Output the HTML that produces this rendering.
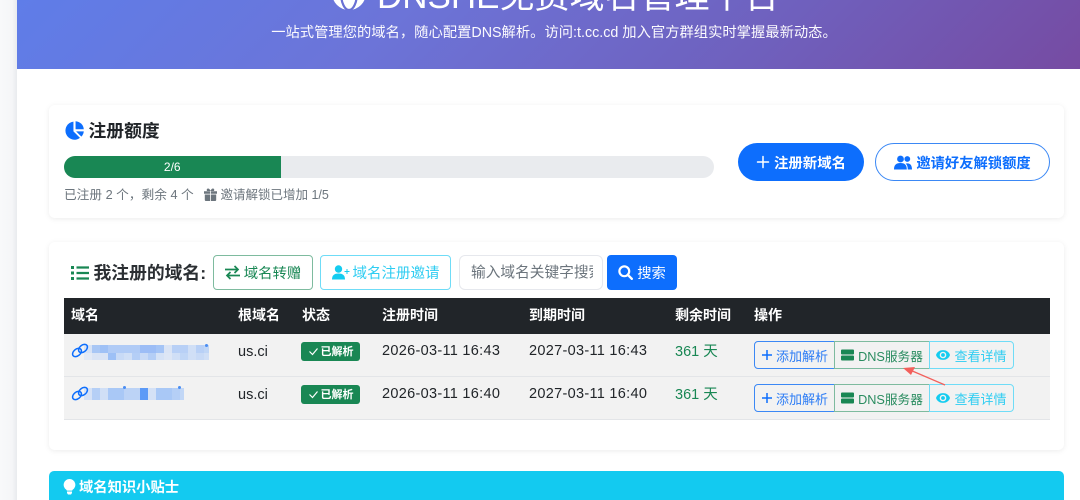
<!DOCTYPE html>
<html lang="zh-CN"><head><meta charset="utf-8"><title>DNSHE免费域名管理平台</title>
<style>
*{box-sizing:border-box;margin:0;padding:0}
html,body{width:1080px;height:500px;overflow:hidden;background:#fff}
body{font-family:"Liberation Sans","Noto Sans CJK SC",sans-serif;color:#212529;position:relative}
#w{position:absolute;inset:0;filter:blur(.3px)}
.a{position:absolute;white-space:nowrap}
.card{position:absolute;background:#fff;border-radius:6px;box-shadow:0 1px 6px rgba(0,0,0,.08)}
.btn{position:absolute;display:flex;align-items:center;justify-content:center;white-space:nowrap}
svg{display:block;flex:none}
.th{position:absolute;top:306px;color:#fff;font-size:14px;font-weight:700;line-height:18px;white-space:nowrap}
.td{position:absolute;font-size:14px;line-height:18px;white-space:nowrap;color:#212529}
.dt{font-size:14.5px;letter-spacing:.3px}
.g{display:flex;position:absolute;left:754px;width:260px;height:28px;font-size:13px}
.g div{display:flex;align-items:center;justify-content:center;gap:3px;height:28px;border:1px solid;background:transparent}
.badge{position:absolute;left:301px;width:59px;height:19px;background:#198754;color:#fff;font-size:11px;font-weight:700;border-radius:3px;display:flex;align-items:center;justify-content:center;gap:2px}
.row{position:absolute;display:flex}
.row i{display:block;width:8px;height:100%;flex:none}
.dot{position:absolute;width:3px;height:3px;background:#4a8df2;border-radius:50%}
</style></head><body><div id="w">
<div class="a" style="left:0;top:0;width:17px;height:500px;background:linear-gradient(90deg,#f8f9fa 0,#f5f6f8 70%,#e9ebee 100%)"></div>
<div class="a" style="left:17px;top:0;width:1063px;height:69px;background:linear-gradient(135deg,#5f7de8 0%,#6c74d8 35%,#6f60bd 70%,#764ba2 100%)"></div>

<svg class="a" style="left:332px;top:-24px" width="34" height="34" viewBox="0 0 34 34"><circle cx="17" cy="17" r="17" fill="#fff"/><ellipse cx="17" cy="17" rx="8" ry="17" fill="#fff" stroke="#6a70d4" stroke-width="2.200"/></svg>
<div class="a" style="left:377px;top:-23.500px;font-size:35px;line-height:40px;color:#fff;font-weight:400">DNSHE免费域名管理平台</div>
<div class="a" style="left:253px;top:23px;width:602px;text-align:center;font-size:14.300px;line-height:20px;color:#fbfafe">一站式管理您的域名，随心配置DNS解析。访问:t.cc.cd 加入官方群组实时掌握最新动态。</div>

<div class="card" style="left:49px;top:105px;width:1015px;height:113px"></div>
<svg class="a" style="left:65px;top:121px" width="19" height="19" viewBox="0 0 18 18"><path d="M8 .6v9.200l6.200 6.200A8.600 8.600 0 1 1 8 .6Z" fill="#0d6efd"/><path d="M10 .2A8.300 8.300 0 0 1 17.800 7.800H10Z" fill="#0d6efd"/><path d="M10.500 9.800h7.300a8.300 8.300 0 0 1-2.300 5Z" fill="#0d6efd"/></svg>
<div class="a" style="left:88.500px;top:120px;font-size:17.800px;line-height:22px;font-weight:700;color:#212529">注册额度</div>
<div class="a" style="left:64px;top:155.500px;width:650px;height:22.500px;background:#e9ebee;border-radius:11px;overflow:hidden"><div style="width:216.500px;height:100%;background:#198754;color:#fff;font-size:12px;line-height:22.500px;text-align:center">2/6</div></div>
<div class="a" style="left:64px;top:186px;font-size:12.700px;line-height:18px;color:#6c757d">已注册 2 个，剩余 4 个</div>
<svg class="a" style="left:204px;top:188px" width="13" height="13" viewBox="0 0 13 13"><path d="M0 3.200h6.100v2.500H0ZM6.900 3.200H13v2.500H6.900ZM.8 6.500h5.300V13H1.800a1 1 0 0 1-1-1ZM6.900 6.500h5.300V12a1 1 0 0 1-1 1H6.900ZM3 3C2 1 4 0 5 .8 5.800 1.400 6.300 2.300 6.500 3 6.700 2.300 7.200 1.400 8 .8 9 0 11 1 10 3Z" fill="#6c757d"/></svg>
<div class="a" style="left:220.500px;top:186px;font-size:12.500px;line-height:18px;color:#6c757d">邀请解锁已增加 1/5</div>

<div class="btn" style="left:738px;top:143px;width:126px;height:38px;background:#0d6efd;border-radius:19px;color:#fff;font-size:14.400px;font-weight:700;gap:4px"><svg width="14" height="14" viewBox="0 0 14 14"><path d="M7 1.500v11M1.500 7h11" stroke="#fff" stroke-width="1.500" stroke-linecap="round"/></svg>注册新域名</div>
<div class="btn" style="left:875px;top:143px;width:175px;height:38px;background:#fff;border:1px solid #3b88f5;border-radius:19px;color:#0d6efd;font-size:14.300px;font-weight:700;gap:4px"><svg width="18" height="15" viewBox="0 0 18 15"><circle cx="6.500" cy="4" r="3.400" fill="#0d6efd"/><circle cx="13.300" cy="4" r="2.900" fill="#0d6efd"/><path d="M0 14.500c0-4.500 2-6.500 6.500-6.500s6.300 2 6.300 6.500ZM13.800 14.500c0-2.700-.7-4.600-2-5.900 4.200-1.100 6.200 1.500 6.200 5.900Z" fill="#0d6efd"/></svg>邀请好友解锁额度</div>

<div class="card" style="left:49px;top:242px;width:1015px;height:208px"></div>
<svg class="a" style="left:71px;top:265px" width="18" height="16" viewBox="0 0 18 16"><path d="M5.500 2.500H18M5.500 8H18M5.500 13.500H18" stroke="#198754" stroke-width="2.200"/><path d="M0 1h3v3H0ZM0 6.500h3v3H0ZM0 12h3v3H0Z" fill="#198754"/></svg>
<div class="a" style="left:93.500px;top:262px;font-size:17.800px;line-height:22px;font-weight:700;color:#2b2f33">我注册的域名:</div>
<div class="btn" style="left:213px;top:255px;width:100px;height:35px;border:1px solid #7ebb9f;border-radius:4px;color:#198754;font-size:14.400px;gap:4px"><svg width="15" height="15" viewBox="0 0 15 15"><path d="M0 4.500h12.500M9.500 1l3.500 3.500L9.500 8M15 10.500H2.500M5.500 7L2 10.500 5.500 14" fill="none" stroke="#198754" stroke-width="1.700"/></svg>域名转赠</div>
<div class="btn" style="left:320px;top:255px;width:131px;height:35px;border:1px solid #6fdcf7;border-radius:4px;color:#2fcdf2;font-size:14.500px;gap:3px"><svg width="18" height="15" viewBox="0 0 18 15"><circle cx="6.500" cy="4" r="3.700" fill="#14ccf0"/><path d="M0 14.500c0-4.500 2.500-6 6.500-6s6.500 1.500 6.500 6Z" fill="#14ccf0"/><path d="M15 4v5M12.500 6.500h5" stroke="#14ccf0" stroke-width="1"/></svg>域名注册邀请</div>
<div class="a" style="left:459px;top:255px;width:144px;height:35px;border:1px solid #e6e8ed;border-radius:6px;background:#fff"><div style="position:absolute;left:11px;top:1px;width:122px;overflow:hidden;font-size:14.700px;line-height:33px;color:#6c757d">输入域名关键字搜索</div></div>
<div class="btn" style="left:607px;top:255px;width:70px;height:35px;background:#0d6efd;border-radius:4px;color:#fff;font-size:14.300px;font-weight:400;gap:4px"><svg width="15" height="15" viewBox="0 0 15 15"><circle cx="6.300" cy="6.300" r="4.900" fill="none" stroke="#fff" stroke-width="2.200"/><path d="M9.800 9.800l4 4" stroke="#fff" stroke-width="2.400" stroke-linecap="round"/></svg>搜索</div>

<div class="a" style="left:64px;top:298px;width:986px;height:36px;background:#212529"></div>
<div class="th" style="left:71px">域名</div><div class="th" style="left:238px">根域名</div><div class="th" style="left:302px">状态</div><div class="th" style="left:382px">注册时间</div><div class="th" style="left:529px">到期时间</div><div class="th" style="left:675px">剩余时间</div><div class="th" style="left:754px">操作</div>

<div class="a" style="left:64px;top:334px;width:986px;height:43px;background:#f2f2f2;border-bottom:1px solid #e3e5e8"></div>
<div class="a" style="left:64px;top:377px;width:986px;height:43px;background:#f2f2f2;border-bottom:1px solid #e3e5e8"></div>

<div class="row" style="left:84px;top:345px;height:7.500px"><i style="background:#d8e3f5"></i><i style="background:#a9c7f5"></i><i style="background:#9fc1f6"></i><i style="background:#b0cbf6"></i><i style="background:#b0cbf6"></i><i style="background:#b0cbf6"></i><i style="background:#b0cbf6"></i><i style="background:#9cbdf6"></i><i style="background:#9cbdf6"></i><i style="background:#a4c4f6"></i><i style="background:#dae4f5"></i><i style="background:#b8d0f6"></i><i style="background:#b8d0f6"></i><i style="background:#d0dff6"></i><i style="background:#b8d0f6"></i><i style="background:#c0d6f6;width:5px"></i></div>
<div class="row" style="left:84px;top:352.500px;height:7.500px"><i style="background:#e4eaf5"></i><i style="background:#dae4f5"></i><i style="background:#dae4f5"></i><i style="background:#9dc0f6"></i><i style="background:#c8daf6"></i><i style="background:#d0dff6"></i><i style="background:#b4cef6"></i><i style="background:#c8daf6"></i><i style="background:#b4cef6"></i><i style="background:#d5e2f6"></i><i style="background:#dde6f5"></i><i style="background:#d0dff6"></i><i style="background:#c0d6f6"></i><i style="background:#d0dff6"></i><i style="background:#c8daf6"></i><i style="background:#d0dff6;width:5px"></i></div>
<div class="dot" style="left:204.500px;top:343.500px"></div>
<div class="row" style="left:84px;top:388px;height:12px"><i style="background:#d6e2f6"></i><i style="background:#b5cff6"></i><i style="background:#d0dff6"></i><i style="background:#a9c8f6"></i><i style="background:#a9c8f6"></i><i style="background:#bcd3f6"></i><i style="background:#bcd3f6"></i><i style="background:#5c9af7"></i><i style="background:#d4e1f6"></i><i style="background:#a9c8f6"></i><i style="background:#a9c8f6"></i><i style="background:#b5cff6"></i><i style="background:#c2d7f6;width:4px"></i></div>
<div class="dot" style="left:123px;top:386px"></div>
<div class="dot" style="left:178px;top:386px"></div>

<svg class="a" style="left:71px;top:343px" width="18" height="15" viewBox="0 0 18 15"><g fill="none" stroke="#0d6efd" stroke-width="1.500"><ellipse cx="6" cy="9.500" rx="5" ry="3.400" transform="rotate(-40 6 9.500)"/><ellipse cx="12" cy="5.500" rx="5" ry="3.400" transform="rotate(-40 12 5.500)"/></g></svg>
<svg class="a" style="left:71px;top:386px" width="18" height="15" viewBox="0 0 18 15"><g fill="none" stroke="#0d6efd" stroke-width="1.500"><ellipse cx="6" cy="9.500" rx="5" ry="3.400" transform="rotate(-40 6 9.500)"/><ellipse cx="12" cy="5.500" rx="5" ry="3.400" transform="rotate(-40 12 5.500)"/></g></svg>

<div class="td" style="left:238px;top:342.500px;font-size:14.500px">us.ci</div><div class="td" style="left:238px;top:385.500px;font-size:14.500px">us.ci</div>
<div class="badge" style="top:341.500px"><svg width="11" height="11" viewBox="0 0 11 11"><path d="M1.500 5.500l3 3 5-6" fill="none" stroke="#fff" stroke-width="1.200"/></svg>已解析</div>
<div class="badge" style="top:384.500px"><svg width="11" height="11" viewBox="0 0 11 11"><path d="M1.500 5.500l3 3 5-6" fill="none" stroke="#fff" stroke-width="1.200"/></svg>已解析</div>
<div class="td dt" style="left:382px;top:342px">2026-03-11 16:43</div><div class="td dt" style="left:529px;top:342px">2027-03-11 16:43</div>
<div class="td dt" style="left:382px;top:385px">2026-03-11 16:40</div><div class="td dt" style="left:529px;top:385px">2027-03-11 16:40</div>
<div class="td" style="left:675px;top:343px;color:#198754;font-size:14.500px">361 天</div><div class="td" style="left:675px;top:386px;color:#198754;font-size:14.500px">361 天</div>

<div class="g" style="top:341px">
<div style="width:81px;border-color:#3b88f5;border-radius:4px 0 0 4px;color:#2c7cf5"><svg width="12" height="12" viewBox="0 0 12 12"><path d="M6 1v10M1 6h10" stroke="#0d6efd" stroke-width="1.500"/></svg>添加解析</div>
<div style="width:96px;margin-left:-1px;border-color:#7ebb9f;color:#2a8c60;gap:4px"><svg width="13" height="12" viewBox="0 0 13 12"><rect x="0" y="0.500" width="13" height="5" rx="1" fill="#198754"/><rect x="0" y="6.500" width="13" height="5" rx="1" fill="#198754"/></svg><span style="font-size:12.700px">DNS服务器</span></div>
<div style="width:85px;margin-left:-1px;border-color:#6fdcf7;border-radius:0 4px 4px 0;color:#2fcdf2;gap:4px"><svg width="14" height="12" viewBox="0 0 14 12"><path d="M0 6c2-6.500 12-6.500 14 0-2 6.500-12 6.500-14 0Z" fill="#14ccf0"/><circle cx="7" cy="6" r="3.300" fill="#f2f2f2"/><circle cx="7" cy="6" r="1.900" fill="#14ccf0"/></svg>查看详情</div>
</div>
<div class="g" style="top:384px">
<div style="width:81px;border-color:#3b88f5;border-radius:4px 0 0 4px;color:#2c7cf5"><svg width="12" height="12" viewBox="0 0 12 12"><path d="M6 1v10M1 6h10" stroke="#0d6efd" stroke-width="1.500"/></svg>添加解析</div>
<div style="width:96px;margin-left:-1px;border-color:#7ebb9f;color:#2a8c60;gap:4px"><svg width="13" height="12" viewBox="0 0 13 12"><rect x="0" y="0.500" width="13" height="5" rx="1" fill="#198754"/><rect x="0" y="6.500" width="13" height="5" rx="1" fill="#198754"/></svg><span style="font-size:12.700px">DNS服务器</span></div>
<div style="width:85px;margin-left:-1px;border-color:#6fdcf7;border-radius:0 4px 4px 0;color:#2fcdf2;gap:4px"><svg width="14" height="12" viewBox="0 0 14 12"><path d="M0 6c2-6.500 12-6.500 14 0-2 6.500-12 6.500-14 0Z" fill="#14ccf0"/><circle cx="7" cy="6" r="3.300" fill="#f2f2f2"/><circle cx="7" cy="6" r="1.900" fill="#14ccf0"/></svg>查看详情</div>
</div>
<svg class="a" style="left:900px;top:364px" width="50" height="24" viewBox="0 0 50 24"><path d="M45 21L10 6" stroke="#f2605c" stroke-width="1.300"/><path d="M3 4L15 3 11 11Z" fill="#f2605c"/></svg>

<div class="a" style="left:49px;top:471px;width:1015px;height:40px;background:#13caf0;border-radius:5px 5px 0 0"></div>
<svg class="a" style="left:63px;top:479px" width="13" height="16" viewBox="0 0 13 16"><path d="M6.500 0a5.800 5.800 0 0 1 3.300 10.600c-.4.300-.6.600-.6 1H3.800c0-.4-.2-.7-.6-1A5.800 5.800 0 0 1 6.500 0Z" fill="#fff"/><path d="M4 12.500h5V14l-1 1.500H5L4 14Z" fill="#fff"/></svg>
<div class="a" style="left:79px;top:478px;font-size:14.300px;line-height:20px;font-weight:700;color:#fff">域名知识小贴士</div>
</div></body></html>
